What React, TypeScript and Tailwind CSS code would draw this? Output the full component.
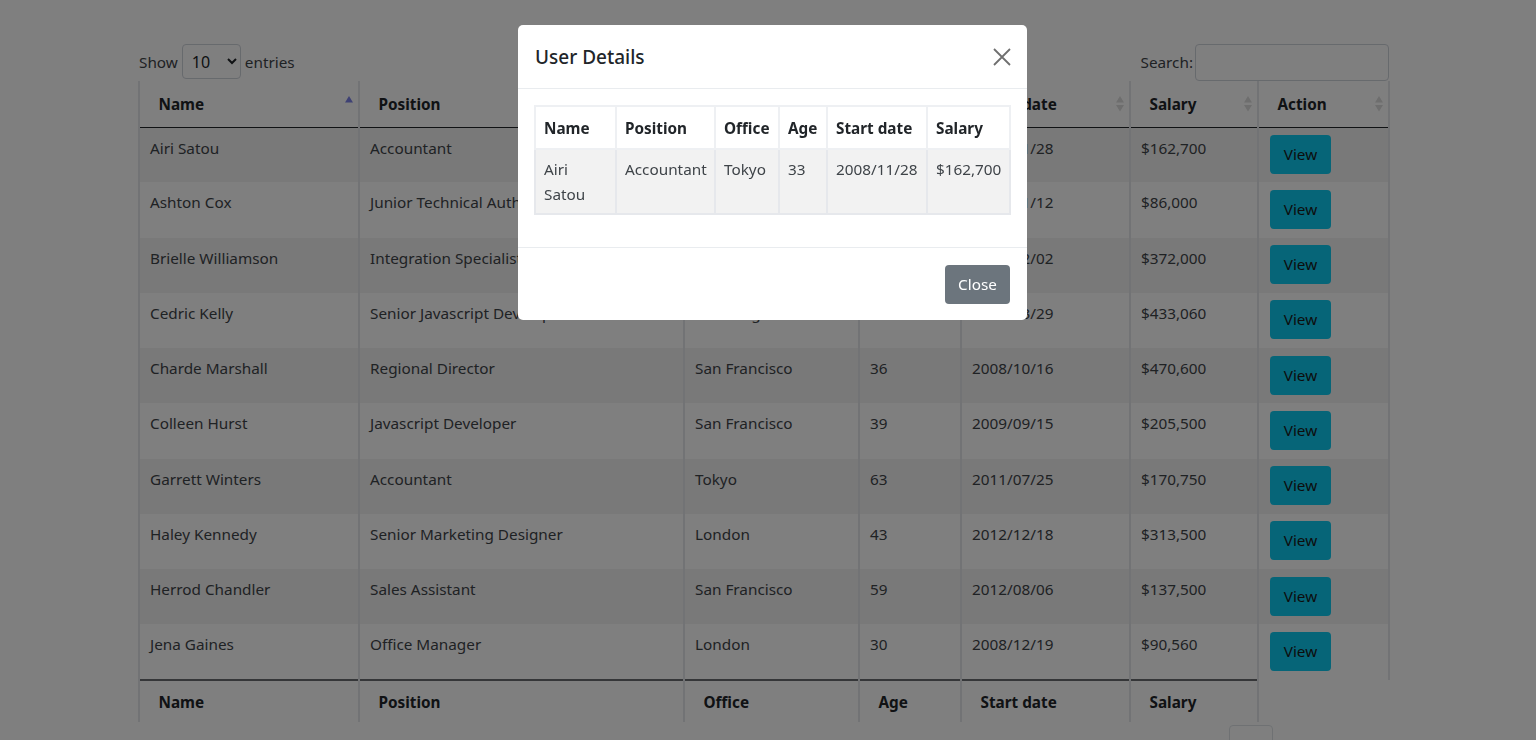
import React from 'react';

type Row = { name: string; position: string; office: string; age: string; start: string; salary: string };

const rows: Row[] = [
    { name: 'Airi Satou', position: 'Accountant', office: 'Tokyo', age: '33', start: '2008/11/28', salary: '$162,700' },
    { name: 'Ashton Cox', position: 'Junior Technical Author', office: 'San Francisco', age: '66', start: '2009/01/12', salary: '$86,000' },
    { name: 'Brielle Williamson', position: 'Integration Specialist', office: 'New York', age: '61', start: '2012/12/02', salary: '$372,000' },
    { name: 'Cedric Kelly', position: 'Senior Javascript Developer', office: 'Edinburgh', age: '22', start: '2012/03/29', salary: '$433,060' },
    { name: 'Charde Marshall', position: 'Regional Director', office: 'San Francisco', age: '36', start: '2008/10/16', salary: '$470,600' },
    { name: 'Colleen Hurst', position: 'Javascript Developer', office: 'San Francisco', age: '39', start: '2009/09/15', salary: '$205,500' },
    { name: 'Garrett Winters', position: 'Accountant', office: 'Tokyo', age: '63', start: '2011/07/25', salary: '$170,750' },
    { name: 'Haley Kennedy', position: 'Senior Marketing Designer', office: 'London', age: '43', start: '2012/12/18', salary: '$313,500' },
    { name: 'Herrod Chandler', position: 'Sales Assistant', office: 'San Francisco', age: '59', start: '2012/08/06', salary: '$137,500' },
    { name: 'Jena Gaines', position: 'Office Manager', office: 'London', age: '30', start: '2008/12/19', salary: '$90,560' },
];

const columns = ['Name', 'Position', 'Office', 'Age', 'Start date', 'Salary'];

const SortIcon = ({ active }: { active?: boolean }) => (
    <svg className="absolute right-[4px] top-[15px]" width="10" height="16" viewBox="0 0 10 16">
        <path d="M5 0L9 6.5H1Z" fill={active ? '#7d82e8' : '#dcdcdc'} />
        {!active && <path d="M5 15.5L9 9H1Z" fill="#dcdcdc" />}
    </svg>
);

const HeadCell = ({ label, active }: { label: string; active?: boolean }) => (
    <th className="relative border-x-2 border-[#e4e7ea] border-b border-b-[#212529] pl-[18.5px] pr-2 pt-[2px] text-left font-bold">
        {label}
        <SortIcon active={active} />
    </th>
);

const DataTable = () => (
    <table className="-ml-px w-[1250px] table-fixed border-collapse">
        <colgroup>
            <col className="w-[220px]" />
            <col className="w-[325px]" />
            <col className="w-[175px]" />
            <col className="w-[102px]" />
            <col className="w-[169px]" />
            <col className="w-[128px]" />
            <col className="w-[131px]" />
        </colgroup>
        <thead>
            <tr className="h-[46px]">
                <HeadCell label="Name" active />
                {columns.slice(1).map((c) => (
                    <HeadCell key={c} label={c} />
                ))}
                <HeadCell label="Action" />
            </tr>
        </thead>
        <tbody>
            {rows.map((r, i) => (
                <tr key={r.name} className={`h-[55.25px] ${i % 2 === 0 ? 'bg-[#f2f2f2]' : 'bg-white'}`}>
                    {[r.name, r.position, r.office, r.age, r.start, r.salary].map((v, j) => (
                        <td key={j} className="border-x-2 border-[#e4e7ea] px-[10px] pb-[20px] pt-[8px] align-top leading-6 text-[#3f4449] whitespace-nowrap overflow-hidden">
                            {v}
                        </td>
                    ))}
                    <td className="border-x-2 border-[#e4e7ea] px-[11px] align-top pt-[7.5px]">
                        <button className="block h-[39px] w-[61px] rounded bg-[#0dcaf0] text-[#1a1a1a]">View</button>
                    </td>
                </tr>
            ))}
        </tbody>
        <tfoot>
            <tr className="h-[42px]">
                {columns.map((c) => (
                    <th key={c} className="border-x-2 border-[#e4e7ea] border-t-2 border-t-[#6a6d70] pl-[18.5px] pt-[3px] text-left font-bold">
                        {c}
                    </th>
                ))}
            </tr>
        </tfoot>
    </table>
);

const UserModal = () => {
    const u = rows[0];
    const vals = [u.name, u.position, u.office, u.age, u.start, u.salary];
    return (
        <div className="w-[509px] h-[295px] rounded-[5px] bg-white flex flex-col">
            <div className="h-[64px] flex items-center justify-between pl-[17px] pr-[16px] pt-[2px] border-b border-[#e9ecef]">
                <h5 className="text-[19px] font-medium text-[#212529]">User Details</h5>
                <svg width="18" height="18" viewBox="0 0 18 18" fill="none" stroke="#6f6f6f" strokeWidth="1.8" className="-mt-[2px]">
                    <path d="M1 1L17 17M17 1L1 17" />
                </svg>
            </div>
            <div className="h-[159px] pt-[16px] pl-[16px] pr-[17px] border-b border-[#e9ecef]">
                <table className="w-[475px] table-fixed border-collapse">
                    <colgroup>
                        <col className="w-[81px]" />
                        <col className="w-[99px]" />
                        <col className="w-[64px]" />
                        <col className="w-[48px]" />
                        <col className="w-[100px]" />
                        <col className="w-[83px]" />
                    </colgroup>
                    <thead>
                        <tr className="h-[43px]">
                            {columns.map((c) => (
                                <th key={c} className="border-2 border-[#eef0f3] pl-[8px] pt-[2px] text-left font-bold whitespace-nowrap">
                                    {c}
                                </th>
                            ))}
                        </tr>
                    </thead>
                    <tbody>
                        <tr className="bg-[#f2f2f2] h-[65px]">
                            {vals.map((v, i) => (
                                <td key={i} className="border-2 border-[#e6e8ec] pl-[8px] pr-[12px] pt-[7px] align-top leading-[24.5px] text-[#3f4449] whitespace-pre-line">
                                    {i === 0 ? 'Airi\nSatou' : <span className="whitespace-nowrap">{v}</span>}
                                </td>
                            ))}
                        </tr>
                    </tbody>
                </table>
            </div>
            <div className="flex-1 flex items-start justify-end pt-[17px] pr-[17px]">
                <button className="h-[39px] w-[65px] rounded bg-[#6c757d] text-white">Close</button>
            </div>
        </div>
    );
};

export default function App() {
    return (
        <div className="relative h-[740px] overflow-hidden bg-white text-[15.3px] text-[#212529] font-['Noto_Sans','Open_Sans',sans-serif]">
            <div className="ml-[139px] w-[1250px] pt-[44px]">
                <div className="flex items-start justify-between h-[37px]">
                    <label className="flex items-center gap-[4px] h-[35px] pt-[1px] text-[#3f4449]">
                        Show
                        <select className="h-[35px] -mt-[1px] w-[59px] rounded border border-[#ced4da] bg-white pl-[5px] text-[16px] text-[#212529]">
                            <option>10</option>
                            <option>25</option>
                        </select>
                        <span>entries</span>
                    </label>
                    <label className="flex items-center gap-[2px] text-[#3f4449]">
                        Search:
                        <input className="h-[37px] w-[194px] rounded border border-[#ced4da]" />
                    </label>
                </div>
                <DataTable />
                <div className="flex justify-end pr-[116px] mt-[3px]">
                    <div className="h-[38px] w-[44px] rounded-t border border-[#dee2e6]" />
                </div>
            </div>
            <div className="fixed inset-0 bg-black/50 pl-[518px] pt-[25px]">
                <UserModal />
            </div>
        </div>
    );
}
